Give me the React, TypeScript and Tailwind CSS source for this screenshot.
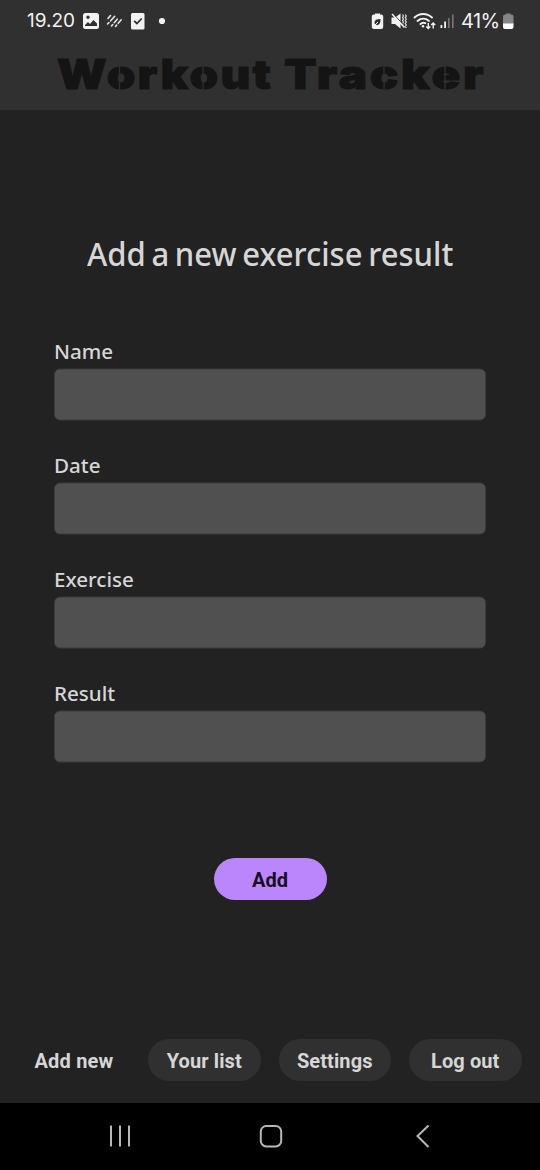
const fields = ["Name", "Date", "Exercise", "Result"];
const tabs = ["Your list", "Settings", "Log out"];

function StatusLeft() {
  return (
    <svg className="shrink-0" width="84" height="20" viewBox="82 11 84 20" fill="#f2f2f2">
      <path fillRule="evenodd" d="M85.500 13h11a2.500 2.500 0 0 1 2.500 2.500v11a2.500 2.500 0 0 1-2.500 2.500h-11a2.500 2.500 0 0 1-2.500-2.500v-11a2.500 2.500 0 0 1 2.500-2.500ZM85 26h12v-2.500L93.500 20l-3.500 4-2-2-3 3Z M88 15.500a1.700 1.700 0 1 0 0 3.400a1.700 1.700 0 0 0 0-3.400Z" />
      <path d="M108 18.500l2.500-3M107.500 24l1.500-1.500m1.700-1.700l4-4.500M111.500 26l1.200-1.500m1.500-1.800l3-3.500M115.500 26.500l1.200-1.500m1.500-1.700l3-3.500" fill="none" stroke="#e6e6e6" strokeWidth="1.600" strokeLinecap="round" />
      <rect x="131" y="13" width="13.500" height="16.500" rx="1.500" />
      <path d="M134.200 20.800l2.700 2.700 4.800-5" fill="none" stroke="#303030" strokeWidth="1.800" />
      <circle cx="162" cy="21" r="3.100" />
    </svg>
  );
}

function StatusRight() {
  return (
    <svg className="shrink-0" width="84" height="20" viewBox="371 11 84 20" fill="#f2f2f2">
      <path d="M375 14.500V13.500h5v1h1.200a2 2 0 0 1 2 2v10.500a2 2 0 0 1-2 2h-7.400a2 2 0 0 1-2-2V16.500a2 2 0 0 1 2-2Z" />
      <path d="M380.500 19c-4 0-6 1-6 3.500 0 1.500 1 2.500 2.500 2.500 2.800 0 3.500-2.500 3.500-6Z" fill="#303030" />
      <path d="M374 26l4-4" stroke="#f2f2f2" strokeWidth="1" />
      <path d="M391.500 17.500h3.500l5.500-4v15l-5.500-4.500h-3.500Z" />
      <path d="M402.500 14.500l1 1.500-1 1.500 1 1.500-1 1.500 1 1.500-1 1.500 1 1.500M405.300 14.500l1 1.500-1 1.500 1 1.500-1 1.500 1 1.500-1 1.500 1 1.500-1 1.500 1 1.500" fill="none" stroke="#dedede" strokeWidth="1.200" />
      <path d="M393 13.500L405 26.500" stroke="#303030" strokeWidth="1" />
      <path d="M392 14L404.500 27.500" stroke="#f2f2f2" strokeWidth="1.600" />
      <g fill="none" stroke="#f2f2f2" strokeWidth="1.900" strokeLinecap="round">
        <path d="M414.500 17.500c5-4.700 12.500-4.700 17.500 0M417.500 21c3.500-3 8-3 11.500 0M420.500 24c1.500-1.400 3.200-1.600 4.800-.8" />
      </g>
      <circle cx="423" cy="26.200" r="1.200" />
      <path d="M428.300 23v5.500m-2-2l2 2 2-2M433.200 28.500V23m-2 2l2-2 2 2" fill="none" stroke="#f2f2f2" strokeWidth="1.400" />
      <rect x="440.500" y="25" width="1.800" height="3" />
      <rect x="444.200" y="21.500" width="1.800" height="6.500" />
      <rect x="448" y="18" width="1.600" height="10" fill="#777" />
      <rect x="452" y="14.500" width="1.600" height="13.500" fill="#777" />
    </svg>
  );
}

function Battery() {
  return (
    <svg className="shrink-0" width="12" height="18" viewBox="502 12 12 18">
      <path d="M506 14.500v-1h4.500v1h1a2 2 0 0 1 2 2V24H503v-7.500a2 2 0 0 1 2-2Z" fill="#858585" />
      <path d="M503 23.500h10.500V27a2 2 0 0 1-2 2H505a2 2 0 0 1-2-2Z" fill="#fff" />
    </svg>
  );
}

function StencilCuts() {
  return (
    <svg className="absolute inset-0" width="540" height="64" viewBox="0 42 540 64" fill="none" stroke="#303030" strokeWidth="1.300" aria-hidden="true">
      <path d="M119.500 64v27M203 64v27M384 64v27M445 64v27" />
    </svg>
  );
}

export default function App() {
  return (
    <div className="flex h-[1170px] w-[540px] flex-col overflow-hidden bg-[#222222] font-['Roboto',sans-serif] text-[#d6d6d6]">
      <header className="h-[110px] bg-[#303030]">
        <div className="flex h-[42px] items-center pl-[27px] text-[#f2f2f2]">
          <span className="w-[55px] shrink-0 whitespace-nowrap pt-px font-['Inter',sans-serif] text-[19px]">19.20</span>
          <StatusLeft />
          <span className="w-[205px] shrink-0" />
          <StatusRight />
          <span className="ml-[6px] w-[41px] shrink-0 whitespace-nowrap font-['Inter',sans-serif] text-[20px] tracking-[-0.600px]">41%</span>
          <Battery />
        </div>
        <h1 className="relative flex h-[64px] font-['Inter',sans-serif] text-[41px] leading-[64px] font-black text-[#141414] [-webkit-text-stroke:1px_#141414]">
          <span className="ml-[56.500px] w-[227px] shrink-0 origin-left scale-x-[1.120] tracking-[2px] whitespace-nowrap">Workout</span>
          <span className="origin-left scale-x-[1.160] tracking-[2.300px] whitespace-nowrap">Tracker</span>
          <StencilCuts />
        </h1>
      </header>

      <main className="flex h-[907px] flex-col items-center px-[54px] pt-[120px] font-['Noto_Sans',sans-serif]">
        <h2 className="h-[48px] w-[366px] origin-left scale-x-[0.970] text-[32px] leading-[48px] font-medium whitespace-nowrap [word-spacing:-2.500px]">Add a new exercise result</h2>
        <form className="mt-[60px] flex w-full flex-col gap-[32px]">
          {fields.map((name) => (
            <label key={name} className="flex h-[82px] flex-col text-[20px] leading-[30px] font-medium">
              <span className="h-[30px] shrink-0 origin-left translate-y-[-1px] scale-x-[1.030]">{name}</span>
              <input className="h-[52px] w-full shrink-0 translate-y-[0.500px] rounded-[6px] border border-[#3b3b3b] bg-[#505050] outline-none" />
            </label>
          ))}
        </form>
        <button className="mt-[96px] h-[42px] w-[113px] rounded-full bg-[#bb86fc] pt-[2px] font-['Roboto',sans-serif] text-[20px] font-bold text-[#150d20]">Add</button>
      </main>

      <nav className="flex h-[86px] gap-[18px] pt-[22px] pl-[18px] text-[20px] font-bold">
        <button className="h-[42px] w-[112px] pt-[2px] tracking-[0.200px]">Add new</button>
        {tabs.map((tab) => (
          <button key={tab} className="h-[42px] w-[112.500px] rounded-full bg-[#303030] pt-[2px] tracking-[0.100px] whitespace-nowrap">{tab}</button>
        ))}
      </nav>

      <footer className="flex h-[67px] items-center bg-black">
        <svg width="540" height="67" viewBox="0 1103 540 67" fill="none" stroke="#b8b8b8" strokeWidth="2">
          <path d="M111 1125.500v21M120 1125.500v21M129 1125.500v21" />
          <rect x="260.800" y="1126" width="20.400" height="20.400" rx="5.500" />
          <path d="M428.500 1125.500l-11 10.500 11 11" />
        </svg>
      </footer>
    </div>
  );
}
